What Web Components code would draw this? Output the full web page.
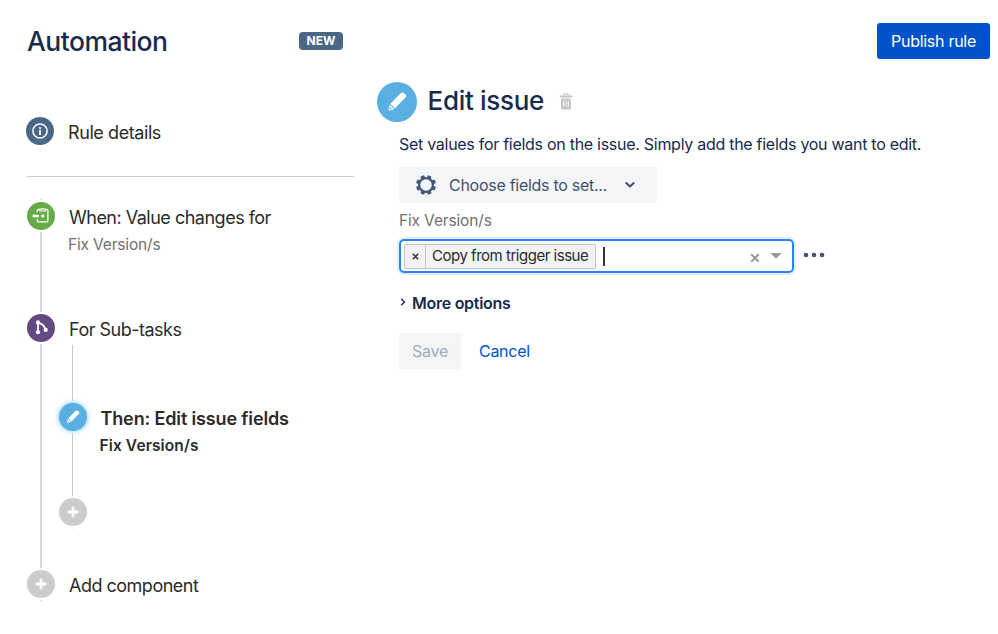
<!DOCTYPE html>
<html lang="en">
<head>
<meta charset="utf-8">
<title>Automation</title>
<style>
  body {
    margin: 0;
    background: #fff;
    color: #172b4d;
    font-family: Inter, "Liberation Sans", sans-serif;
    font-size: 16px;
  }
</style>
</head>
<body>
<automation-page></automation-page>

<script>
const icons = {
  info: `<svg viewBox="0 0 28 28"><circle cx="14" cy="14" r="7.1" fill="none" stroke="#fff" stroke-width="1.5"/><circle cx="14" cy="11" r="1.1" fill="#fff"/><path d="M13 13h2v5h-2z" fill="#fff"/></svg>`,
  trigger: `<svg viewBox="0 0 28 28" fill="none" stroke="#fff"><path d="M10.3 10V8.6q0-1.3 1.3-1.3h8q1.3 0 1.3 1.3v10q0 1.3-1.3 1.3h-8q-1.3 0-1.3-1.3V17" stroke-width="1.3"/><path d="M12.8 9V7.300h1.600q1.200-1.600 2.400 0h1.600V9z" fill="#67ab49" stroke-width="1.100"/><path d="M5.600 14h6.200" stroke-width="2.600"/><path d="M13.800 14h2.400" stroke-width="1.500"/><path d="M15.400 11.700l2.500 2.300-2.500 2.300z" fill="#fff" stroke="none"/></svg>`,
  branch: `<svg viewBox="0 0 28 28" fill="none" stroke="#fff" stroke-width="1.8"><path d="M11 8.6v9.6M11 8.8q6 1 7.4 6.6"/><g fill="#fff" stroke="none"><circle cx="11" cy="8.4" r="2.1"/><circle cx="11" cy="18.2" r="2.1"/><circle cx="18.7" cy="15.9" r="2.1"/></g></svg>`,
  pencil: `<svg viewBox="0 0 40 40" fill="#fff"><path d="M23.4 11.6q1.5-1.4 3-.9l2.200 1.900q1.200 1.400 0 2.900L17.900 26.300l-4.500-4.500z"/><path fill-rule="evenodd" d="M12.700 22.500l4.600 4.400-4 1.600q-2.100.5-1.800-1.600zm.5 2.500l-.7 2.100.4.5 2-.7z"/></svg>`,
  plus: `<svg viewBox="0 0 28 28"><path d="M14 9.900v8.200M9.900 14h8.200" stroke="#fff" stroke-width="2.900" stroke-linecap="round"/></svg>`,
  trash: `<svg viewBox="0 0 14 18"><path d="M4.6 2.6V1.7q0-.9.9-.9h3q.9 0 .9.9v.9" fill="none" stroke="#c6c6c6" stroke-width="1.3"/><rect x=".8" y="2.5" width="12.4" height="2" rx=".8" fill="#c6c6c6"/><path d="M2 5.6h10v9.2q0 1.7-1.7 1.7H3.7q-1.7 0-1.7-1.7z" fill="#c6c6c6"/><path d="M4.7 7.6v6.2M7 7.6v6.2M9.3 7.6v6.2" stroke="#fff" stroke-width=".9"/></svg>`,
  gear: `<svg viewBox="-10 -10 20 20"><circle r="6.9" fill="none" stroke="#44597c" stroke-width="2.3"/><g fill="#44597c">${
    [22.5, 67.5, 112.5, 157.5, 202.5, 247.5, 292.5, 337.5].map(a => `<rect x="-2" y="-10" width="4" height="3.2" rx="1" transform="rotate(${a})"/>`).join('')
  }</g></svg>`,
  down: `<svg viewBox="0 0 10 8"><path d="M1.3 2.100L5 5.500l3.700-3.400" fill="none" stroke="#42526e" stroke-width="2.100" stroke-linecap="round" stroke-linejoin="round"/></svg>`,
  right: `<svg viewBox="0 0 6 8"><path d="M1.200 .8l3.200 3.200-3.200 3.200" fill="none" stroke="#172b4d" stroke-width="1.400"/></svg>`,
  cross: `<svg viewBox="0 0 10 10"><path d="M1.2 1.2l7.6 7.6M8.8 1.2L1.2 8.8" stroke="currentColor" stroke-width="2"/></svg>`,
  caret: `<svg viewBox="0 0 12 6"><path d="M.4 0h11.2L6 5.8z" fill="#999"/></svg>`,
  dots: `<svg viewBox="0 0 22 6" fill="#42526e"><circle cx="3" cy="3" r="2.3"/><circle cx="11" cy="3" r="2.3"/><circle cx="19" cy="3" r="2.3"/></svg>`
}

function define(name, html) {
  const template = document.createElement('template')
  template.innerHTML = html
  customElements.define(name, class extends HTMLElement {
    constructor() {
      super()
      this.attachShadow({mode: 'open'}).appendChild(template.content.cloneNode(true))
    }
  })
}

class AppIcon extends HTMLElement {
  connectedCallback() {
    if (this.shadowRoot) return
    this.attachShadow({mode: 'open'}).innerHTML = `
      <style>
        :host { display: block; flex: none; }
        svg { display: block; width: 100%; height: 100%; }
      </style>
      ${icons[this.getAttribute('name')] || ''}`
  }
}
customElements.define('app-icon', AppIcon)

// Round coloured badge, takes its icon from the "icon" attribute
class StepBadge extends HTMLElement {
  connectedCallback() {
    if (this.shadowRoot) return
    this.attachShadow({mode: 'open'}).innerHTML = `
      <style>
        :host {
          display: block;
          flex: none;
          width: 28px;
          height: 28px;
          border-radius: 50%;
          background: #ccc;
        }
        :host([tone="slate"]) { background: #4a6785; }
        :host([tone="green"]) { background: #67ab49; }
        :host([tone="purple"]) { background: #654982; }
        :host([tone="blue"]) { background: #59afe1; }
        :host([active]) { box-shadow: 0 0 5px 1px #9bd6f7; }
        :host([large]) { width: 40px; height: 40px; }
        app-icon { width: 100%; height: 100%; }
      </style>
      <app-icon name="${this.getAttribute('icon')}"></app-icon>`
  }
}
customElements.define('step-badge', StepBadge)

// One step of the rule: badge and connector on the left, texts on the right
define('rule-step', `
  <style>
    :host {
      display: flex;
      gap: 14px;
      height: var(--span, 28px);
      color: #2b2b2b;
    }
    .rail {
      display: flex;
      flex-direction: column;
      align-items: center;
      gap: 2px;
      width: 28px;
      flex: none;
    }
    .line {
      flex: 1;
      width: var(--line, 2px);
      margin-bottom: 2px;
      background: var(--line-color, #dadada);
    }
    :host([last]) .line { display: none; }
    :host([end]) .line { flex: none; height: 1px; margin: 0; background: #e4e4e4; }
    .title {
      line-height: 31px;
      font-size: 18px;
      letter-spacing: -.5px;
      white-space: nowrap;
    }
    .sub {
      margin-left: -1px;
      line-height: 24px;
      font-size: 15.5px;
      letter-spacing: -.17px;
      color: #707070;
      white-space: nowrap;
    }
    :host([active]) .title, :host([active]) .sub {
      font-weight: 600;
      letter-spacing: -.14px;
      color: #2b2b2b;
    }
    :host([active]) .sub { letter-spacing: .12px; }
  </style>
  <div class="rail"><slot name="badge"></slot><div class="line"></div></div>
  <div>
    <div class="title"><slot></slot></div>
    <div class="sub"><slot name="sub"></slot></div>
    <slot name="branch"></slot>
  </div>
`)

define('rule-branch', `
  <style>
    :host { display: block; margin-left: -10.5px; --line: 1px; --line-color: #c8c8c8; }
    .lead { width: 1px; height: 56px; margin: 0 0 2px 13.5px; background: #c8c8c8; }
  </style>
  <div class="lead"></div>
  <slot></slot>
`)

define('rule-sidebar', `
  <style>
    :host { display: block; width: 327px; padding: 23px 0 0 27px; }
    header { display: flex; align-items: center; justify-content: space-between; height: 36px; }
    h1 { margin: 0; font-size: 26.5px; font-weight: 500; letter-spacing: -.53px; color: #172b4d; }
    .new {
      width: 44px;
      margin: 0 11px 1px 0;
      border-radius: 4px;
      background: #4a6785;
      color: #fff;
      font-size: 12px;
      font-weight: 700;
      line-height: 18px;
      text-align: center;
    }
    .details { margin: 58px 0 0 -1px; }
    .name { letter-spacing: -.42px; }
    hr { margin: 31px 0 22px; border: 0; height: 1px; background: #ccc; }
    .tick { width: 2px; height: 1px; margin: 0 0 2px 13px; background: #e4e4e4; }
  </style>
  <header><h1>Automation</h1><span class="new">NEW</span></header>
  <rule-step class="details" last>
    <step-badge slot="badge" tone="slate" icon="info"></step-badge>
    <span class="name">Rule details</span>
  </rule-step>
  <hr>
  <div class="tick"></div>
  <rule-step style="--span: 112px">
    <step-badge slot="badge" tone="green" icon="trigger"></step-badge>
    <span>When: Value changes for</span>
    <span slot="sub">Fix Version/s</span>
  </rule-step>
  <rule-step style="--span: 256px">
    <step-badge slot="badge" tone="purple" icon="branch"></step-badge>
    <span>For Sub-tasks</span>
    <rule-branch slot="branch">
      <rule-step active style="--span: 95px">
        <step-badge slot="badge" tone="blue" icon="pencil" active></step-badge>
        <span>Then: Edit issue fields</span>
        <span slot="sub">Fix Version/s</span>
      </rule-step>
      <rule-step end style="--span: 28px">
        <step-badge slot="badge" icon="plus"></step-badge>
      </rule-step>
    </rule-branch>
  </rule-step>
  <rule-step end style="--span: 28px">
    <step-badge slot="badge" icon="plus"></step-badge>
    <span>Add component</span>
  </rule-step>
`)

define('app-button', `
  <style>
    :host {
      display: flex;
      align-items: center;
      justify-content: center;
      box-sizing: border-box;
      height: 36px;
      border-radius: 3px;
      background: #f4f5f7;
      color: #42526e;
      font-size: 16px;
      letter-spacing: -.28px;
      white-space: nowrap;
    }
    :host([primary]) { background: #0052cc; color: #fff; }
    :host([disabled]) { color: #a5adba; }
    :host([link]) { background: none; color: #0052cc; }
  </style>
  <slot></slot>
`)

define('token-select', `
  <style>
    :host {
      display: flex;
      align-items: center;
      box-sizing: border-box;
      width: 395px;
      height: 34px;
      padding: 0 10px 0 3px;
      border: 2px solid #2684ff;
      border-radius: 5px;
      box-shadow: 0 0 0 2px #e3eefc;
    }
    .token {
      display: flex;
      box-sizing: border-box;
      width: 192px;
      height: 25px;
      border: 1px solid #c2c2c2;
      border-radius: 2px;
      background: #f3f3f3;
      color: #2b2b2b;
      font-size: 15px;
      letter-spacing: -.48px;
      line-height: 22px;
      white-space: nowrap;
    }
    .remove {
      display: flex;
      flex: none;
      align-items: center;
      justify-content: center;
      width: 20px;
      border-right: 1px solid #c8c8c8;
    }
    .remove app-icon { width: 7px; height: 7px; margin-top: 1px; }
    .label { padding-left: 6px; }
    .caret { width: 2px; height: 19px; margin-left: 7px; background: #333; }
    .clear { width: 10px; height: 10px; margin: 4px 10px 0 auto; color: #999; }
    .arrow { width: 12px; height: 6px; }
  </style>
  <div class="token">
    <span class="remove"><app-icon name="cross"></app-icon></span>
    <span class="label"><slot></slot></span>
  </div>
  <div class="caret"></div>
  <app-icon class="clear" name="cross"></app-icon>
  <app-icon class="arrow" name="caret"></app-icon>
`)

define('issue-editor', `
  <style>
    :host { display: block; padding: 81px 0 0 23px; }
    header { display: flex; align-items: center; height: 41px; }
    h2 { margin: -2px 15px 0 10.5px; font-size: 26px; font-weight: 500; letter-spacing: -.3px; }
    .trash { width: 14px; height: 18px; margin-top: 1px; }
    .fields { margin-left: 22px; }
    p { margin: 12px 0 13px; line-height: 20px; letter-spacing: -.28px; white-space: nowrap; }
    .choose { width: 258px; justify-content: flex-start; padding-left: 17px; }
    .gear { width: 20px; height: 20px; margin-right: 13px; }
    .down { width: 10px; height: 8px; margin-left: 18px; }
    label { display: block; margin: 8px 0 8px; line-height: 20px; font-size: 15.5px; letter-spacing: -.15px; color: #707070; }
    .row { display: flex; align-items: center; gap: 9px; }
    .dots { width: 22px; height: 6px; margin-bottom: 2px; }
    .more { display: flex; align-items: center; gap: 6px; margin: 20px 0; height: 20px; font-weight: 600; letter-spacing: -.27px; }
    .more app-icon { width: 6px; height: 8px; margin: 0 0 3px 1px; }
    .actions { display: flex; gap: 18px; }
    .save { width: 62px; }
  </style>
  <header>
    <step-badge large tone="blue" icon="pencil"></step-badge>
    <h2>Edit issue</h2>
    <app-icon class="trash" name="trash"></app-icon>
  </header>
  <div class="fields">
    <p><span>Set values for fields on the issue. Simply add the fields you want to edit.</span></p>
    <app-button class="choose">
      <app-icon class="gear" name="gear"></app-icon>
      <span>Choose fields to set...</span>
      <app-icon class="down" name="down"></app-icon>
    </app-button>
    <label>Fix Version/s</label>
    <div class="row">
      <token-select>Copy from trigger issue</token-select>
      <app-icon class="dots" name="dots"></app-icon>
    </div>
    <div class="more"><app-icon name="right"></app-icon><span>More options</span></div>
    <div class="actions">
      <app-button class="save" disabled>Save</app-button>
      <app-button link>Cancel</app-button>
    </div>
  </div>
`)

define('automation-page', `
  <style>
    :host {
      display: grid;
      grid-template-columns: 354px 1fr auto;
      height: 634px;
      overflow: hidden;
    }
    issue-editor { width: 500px; }
    .publish { width: 113px; margin: 23px 8px 0 0; }
  </style>
  <rule-sidebar></rule-sidebar>
  <issue-editor></issue-editor>
  <app-button class="publish" primary>Publish rule</app-button>
`)
</script>
</body>
</html>
